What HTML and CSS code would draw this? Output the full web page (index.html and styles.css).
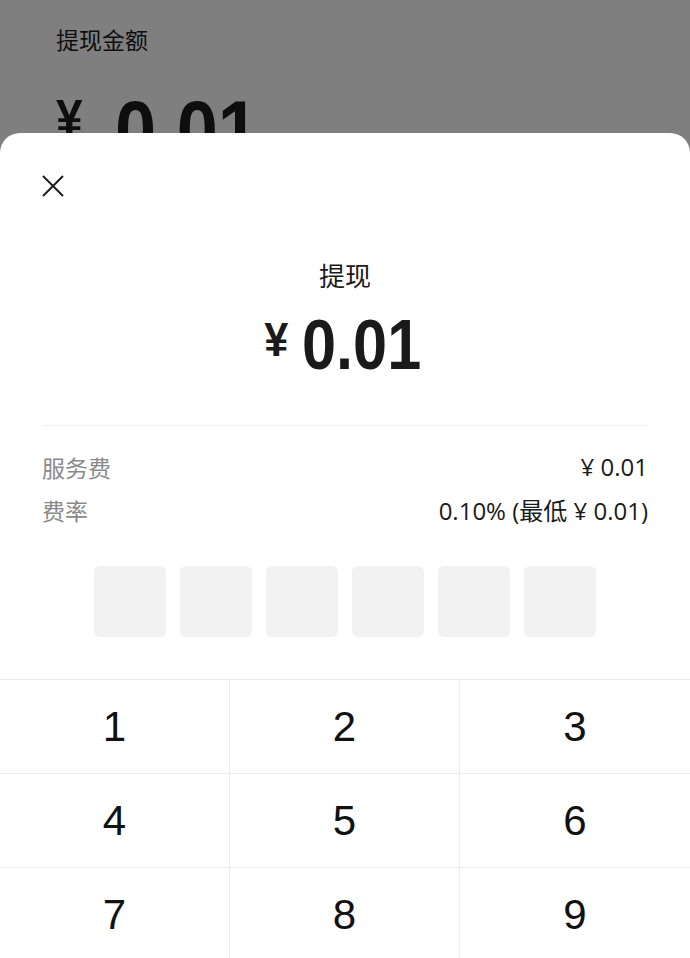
FILE: index.html
```html
<!DOCTYPE html>
<html lang="zh-CN">
<head>
    <meta charset="UTF-8">
    <meta name="viewport" content="width=device-width, initial-scale=1.0">
    <title>提现</title>
    <link rel="stylesheet" href="styles.css">
</head>
<body>

    <!-- Page behind the sheet -->
    <div class="page">
        <div class="page-label">提现金额</div>
        <div class="page-amount"><span class="page-yen">¥</span><span class="page-num">0.01</span></div>
    </div>

    <!-- Bottom sheet -->
    <div class="sheet">
        <div class="close">
            <svg width="22" height="22" viewBox="0 0 22 22">
                <path d="M1 1 L21 21 M21 1 L1 21" stroke="#1f1f1f" stroke-width="2" fill="none"/>
            </svg>
        </div>

        <div class="title">提现</div>
        <div class="amount"><span class="yen">¥</span><span class="num">0.01</span></div>

        <div class="divider"></div>

        <div class="info">
            <div class="info-row">
                <span class="info-label">服务费</span>
                <span class="info-value">¥ 0.01</span>
            </div>
            <div class="info-row">
                <span class="info-label">费率</span>
                <span class="info-value">0.10% (最低 ¥ 0.01)</span>
            </div>
        </div>

        <div class="pin">
            <div class="pin-box"></div>
            <div class="pin-box"></div>
            <div class="pin-box"></div>
            <div class="pin-box"></div>
            <div class="pin-box"></div>
            <div class="pin-box"></div>
        </div>

        <div class="keypad">
            <div class="key">1</div>
            <div class="key">2</div>
            <div class="key">3</div>
            <div class="key">4</div>
            <div class="key">5</div>
            <div class="key">6</div>
            <div class="key">7</div>
            <div class="key">8</div>
            <div class="key">9</div>
        </div>
    </div>

</body>
</html>
```

FILE: styles.css
```css
/* Global */
body {
    margin: 0;
    padding: 0;
    width: 690px;
    height: 958px;
    overflow: hidden;
    position: relative;
    background-color: #7f7f7f;
    font-family: 'Liberation Sans', 'Noto Sans CJK SC', sans-serif;
    color: #1a1a1a;
}

/* Page behind */
.page {
    padding: 23px 56px 0;
    color: #0e0e0e;
}

.page-label {
    font-family: 'Noto Sans CJK SC', sans-serif;
    font-size: 23px;
    line-height: 32px;
}

.page-amount {
    margin-top: 30px;
    font-weight: bold;
    font-size: 84px;
    line-height: 90px;
}

.page-yen {
    display: inline-block;
    font-size: 52px;
    line-height: 1;
    vertical-align: 23px;
    margin-right: 30px;
    transform: scaleX(0.92);
    transform-origin: left;
}

.page-num {
    display: inline-block;
    transform: scaleX(0.88);
    transform-origin: left;
}

/* Sheet */
.sheet {
    position: absolute;
    top: 133px;
    left: 0;
    right: 0;
    bottom: 0;
    background: #ffffff;
    border-radius: 20px 20px 0 0;
}

.close {
    margin: 42px 0 0 42px;
    width: 22px;
    height: 22px;
}

.close svg {
    display: block;
}

.title {
    margin-top: 60px;
    text-align: center;
    font-family: 'Noto Sans CJK SC', sans-serif;
    font-size: 26px;
    line-height: 36px;
    color: #1a1a1a;
}

.amount {
    margin-top: 12px;
    padding-right: 6px;
    display: flex;
    justify-content: center;
    align-items: baseline;
    font-weight: bold;
    font-size: 70px;
    line-height: 80px;
    color: #1a1a1a;
}

.yen {
    display: inline-block;
    font-size: 48px;
    line-height: 1;
    position: relative;
    top: -13px;
    margin-right: 13px;
    transform: scaleX(0.9);
}

.num {
    display: inline-block;
    width: 119px;
    transform: scaleX(0.875);
    transform-origin: left;
}

.divider {
    margin: 40px 42px 0;
    height: 1px;
    background: #eeeeee;
}

/* Fee info */
.info {
    margin: 19px 42px 0;
}

.info-row {
    display: flex;
    justify-content: space-between;
    align-items: center;
    height: 43px;
}

.info-label {
    font-family: 'Noto Sans CJK SC', sans-serif;
    font-size: 23px;
    color: #8a8a8a;
}

.info-value {
    font-family: 'Open Sans', 'Noto Sans CJK SC', sans-serif;
    font-size: 24px;
    color: #1a1a1a;
}

/* Password boxes */
.pin {
    margin-top: 35px;
    display: flex;
    justify-content: center;
    gap: 14px;
}

.pin-box {
    width: 72px;
    height: 71px;
    background: #f2f2f2;
    border-radius: 6px;
}

/* Keypad */
.keypad {
    margin-top: 42px;
    display: grid;
    grid-template-columns: repeat(3, 1fr);
    border-top: 1px solid #e9e9e9;
}

.key {
    height: 93px;
    display: flex;
    align-items: center;
    justify-content: center;
    font-size: 42px;
    color: #111111;
    border-bottom: 1px solid #ececec;
    border-right: 1px solid #ececec;
}

.key:nth-child(3n) {
    border-right: none;
}
```
